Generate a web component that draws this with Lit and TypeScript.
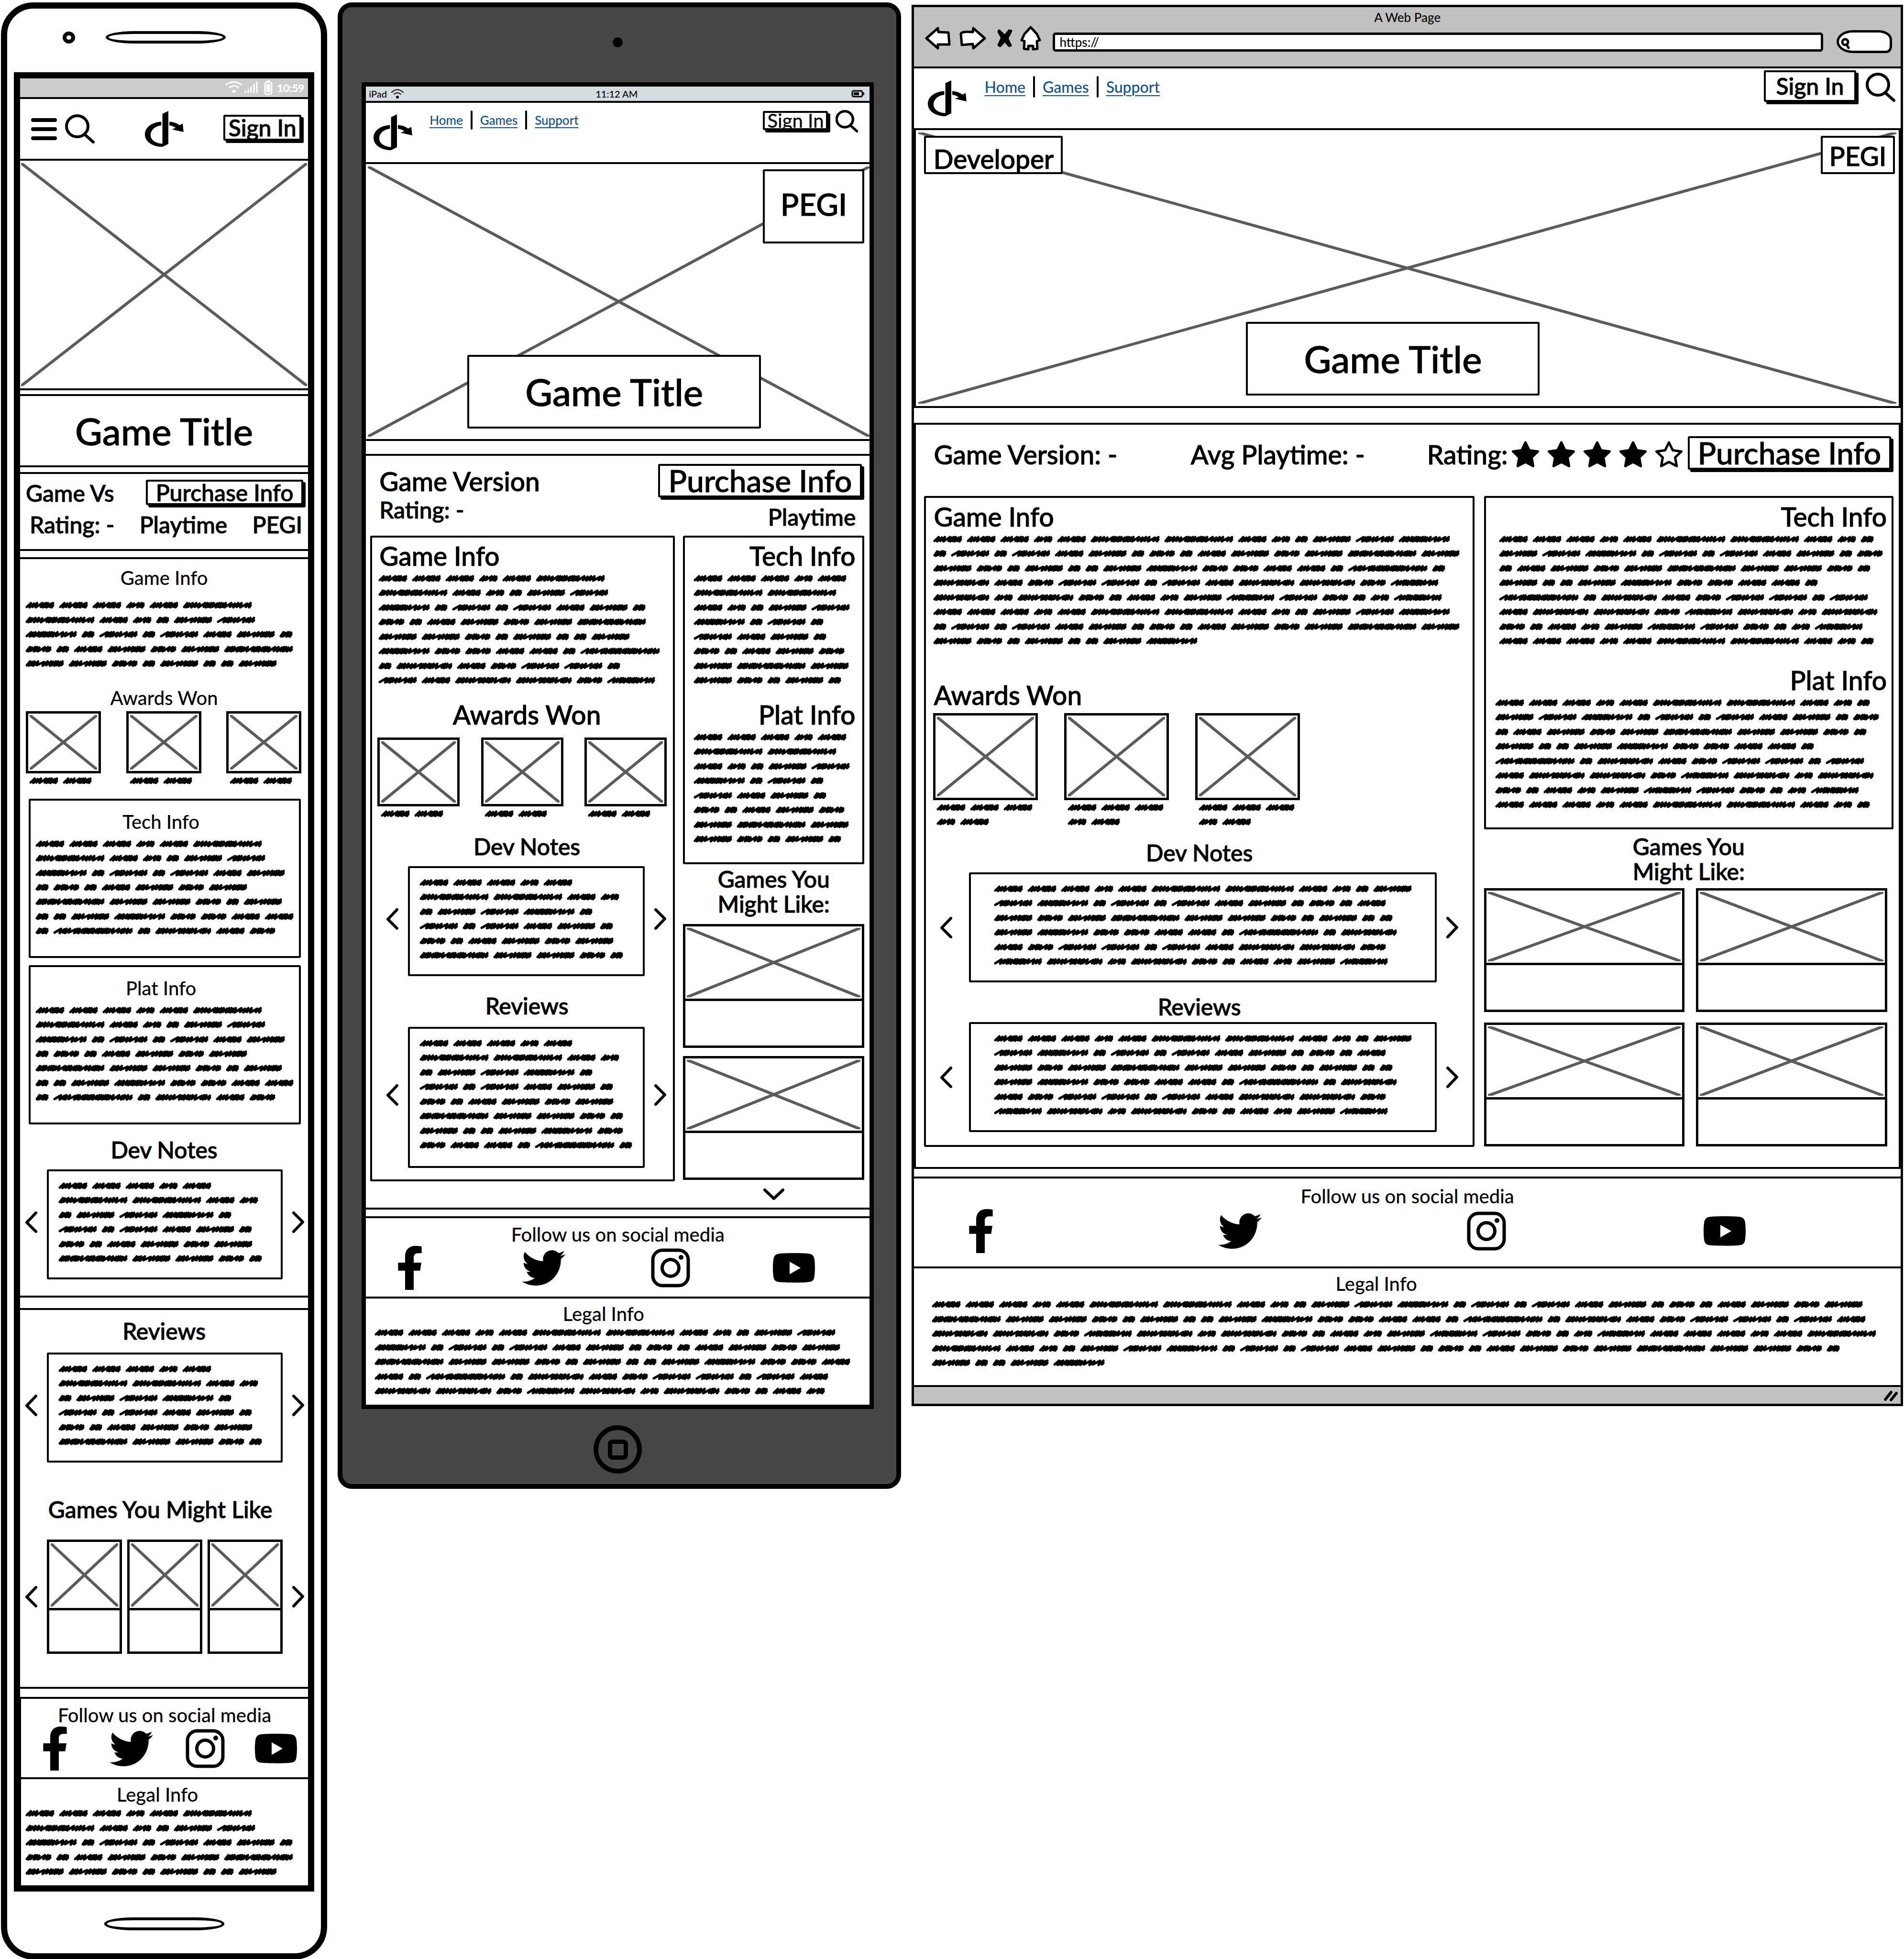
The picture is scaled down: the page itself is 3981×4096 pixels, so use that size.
import { LitElement, html, svg, css } from "lit";
import { customElement, property } from "lit/decorators.js";

/* ---------- Scribbled filler copy ---------- */

/** Word shapes: total width and the stroke rhythm (l = long sweep, s = open loop, d = tight loop). */
const WORDS: Record<string, { width: number; rhythm: string }> = {
  A: { width: 61, rhythm: "sssldddsd" },
  B: { width: 40, rhythm: "sslsd" },
  C: { width: 145, rhythm: "ddssslddddsddddlsssls" },
  D: { width: 28, rhythm: "ddsdd" },
  E: { width: 81, rhythm: "dddslssddddd" },
  e: { width: 81, rhythm: "ldddsslsds" },
  F: { width: 55, rhythm: "ddsddlsd" },
  G: { width: 108, rhythm: "sddsdddddddslsls" },
  H: { width: 145, rhythm: "ddddsdddsldddsdddlssddds" },
  I: { width: 118, rhythm: "dddssslddsddsldds" },
  J: { width: 167, rhythm: "lsdslddsdddddsddddddslsdss" },
  K: { width: 101, rhythm: "lssddsdddddslss" },
};

const STEP: Record<string, number> = { l: 13, s: 8, d: 5 };

const COPY = (
  "A A A B A C C A B D E e G D e D e A E D F D A E F E H E " +
  "E F D E D D E G F F A A D J D I A F e e D e A I I F K " +
  "I B I F D A B E K e F D B K"
).split(" ");

function scribblePath(width: number, rhythm: string): string {
  const steps = [...rhythm].map((c) => STEP[c]);
  const total = steps.reduce((a, b) => a + b, 0);
  const scale = (width - 8) / total;
  let x = 3;
  let d = `M${x} 12`;
  steps.forEach((step, i) => {
    const next = x + step * scale;
    const top = i % 3 === 1 ? 5 : 4;
    const low = i % 2 === 0 ? 13 : 12;
    d += `L${Math.min(next + 2, width - 3).toFixed(1)} ${top}L${(next - 1).toFixed(1)} ${low}`;
    x = next;
  });
  return `${d}L${width - 3} 9`;
}

const PATHS = new Map(
  Object.entries(WORDS).map(([k, w]) => [k, scribblePath(w.width, w.rhythm)]),
);

@customElement("scribble-text")
export class ScribbleText extends LitElement {
  @property({ type: Number }) words = 10;
  @property({ type: Number }) rows = 1;

  static styles = css`
    :host {
      display: block;
    }
    .copy {
      display: flex;
      flex-wrap: wrap;
      column-gap: 9px;
      align-content: space-between;
    }
    .word {
      display: block;
      height: 16px;
      fill: none;
      stroke: #000;
      stroke-width: 5;
      stroke-linecap: round;
      stroke-linejoin: round;
    }
  `;

  render() {
    const height = Math.round((this.rows - 1) * 30.4) + 16;
    return html`<div class="copy" aria-hidden="true" style="height:${height}px">
      ${Array.from({ length: this.words }, (_, i) => {
        const key = COPY[i % COPY.length];
        const w = WORDS[key].width;
        return html`<svg class="word" width=${w} viewBox="0 0 ${w} 16">
          <path d=${PATHS.get(key)!}></path>
        </svg>`;
      })}
    </div>`;
  }
}

/* ---------- Icons ---------- */

const cross = html`<svg class="cross" preserveAspectRatio="none" viewBox="0 0 100 100" aria-hidden="true">
  <path vector-effect="non-scaling-stroke" d="M0 0L100 100M100 0L0 100"></path>
</svg>`;

const logo = html`<svg class="logo" viewBox="0 0 81 75" role="img" aria-label="Logo">
  <path d="M36.6 6L49 0V69L36.6 75ZM34.4 22.6V30.3C22 31.500 12 39 12 50.800C12 61 23 68 36.600 68.400V75C17 75 0 65 0 49C0 34 15 23.500 34.400 22.600ZM51 22.600C60 23 67 26 72.400 29.800L79 26.500L80.800 44L56.500 38.600L64.400 35.300C60 32 56 31 51 30.300Z"></path>
</svg>`;

const magnifier = html`<svg class="line-icon" viewBox="0 0 62 61" aria-hidden="true">
  <ellipse cx="25.500" cy="25" rx="22.500" ry="22"></ellipse>
  <path d="M42 43L59 58"></path>
</svg>`;

const chevron = (dir: string) => {
  const d =
    dir === "left" ? "M22 3L3 23L22 42" : dir === "right" ? "M3 3L22 22L3 42" : "M3 3L22 21L41 3";
  return dir === "down"
    ? html`<svg class="chevron-down" viewBox="0 0 44 24" aria-hidden="true"><path d=${d}></path></svg>`
    : html`<svg class="chevron-side" viewBox="0 0 25 45" aria-hidden="true"><path d=${d}></path></svg>`;
};

const starPath =
  "M28.500 3L36.500 19.500L54.500 22L41.500 34.500L44.700 52.500L28.500 44L12.300 52.500L15.500 34.500L2.500 22L20.500 19.500Z";

const star = (filled: boolean) => svg`<svg class=${filled ? "star star-on" : "star"} viewBox="0 0 57 55"><path d=${starPath}></path></svg>`;

const facebook = html`<svg class="social-fb" viewBox="22 0 276 512" aria-hidden="true">
  <path d="M279.14 288l14.22-92.66h-88.91v-60.13c0-25.35 12.42-50.06 52.24-50.06h40.42V6.260S260.430 0 225.360 0c-73.220 0-121.080 44.380-121.080 124.720v70.620H22.890V288h81.390v224h100.170V288z"></path>
</svg>`;
const twitter = html`<svg class="social-tw" viewBox="0 48 512 416" aria-hidden="true">
  <path d="M459.37 151.716c.325 4.548.325 9.097.325 13.645 0 138.720-105.583 298.558-298.558 298.558-59.452 0-114.680-17.219-161.137-47.106 8.447.974 16.568 1.299 25.340 1.299 49.055 0 94.213-16.568 130.274-44.832-46.132-.975-84.792-31.188-98.112-72.772 6.498.974 12.995 1.624 19.818 1.624 9.421 0 18.843-1.300 27.614-3.573-48.081-9.747-84.143-51.980-84.143-102.985v-1.299c13.969 7.797 30.214 12.670 47.431 13.319-28.264-18.843-46.781-51.005-46.781-87.391 0-19.492 5.197-37.360 14.294-52.954 51.655 63.675 129.300 105.258 216.365 109.807-1.624-7.797-2.599-15.918-2.599-24.040 0-57.828 46.782-104.934 104.934-104.934 30.213 0 57.502 12.670 76.670 33.137 23.715-4.548 46.456-13.320 66.599-25.340-7.798 24.366-24.366 44.833-46.132 57.827 21.117-2.273 41.584-8.122 60.426-16.243-14.292 20.791-32.161 39.308-52.628 54.253z"></path>
</svg>`;
const instagram = html`<svg class="social-ig" viewBox="0 0 82 82" aria-hidden="true">
  <rect x="4" y="4" width="74" height="74" rx="20"></rect>
  <circle cx="41" cy="41" r="17.500"></circle>
  <circle class="dot" cx="63" cy="19" r="5"></circle>
</svg>`;
const youtube = html`<svg class="social-yt" viewBox="14.930 64 546.140 384" aria-hidden="true">
  <path d="M549.655 124.083c-6.281-23.650-24.787-42.276-48.284-48.597C458.781 64 288 64 288 64S117.220 64 74.629 75.486c-23.497 6.322-42.003 24.947-48.284 48.597-11.412 42.867-11.412 132.305-11.412 132.305s0 89.438 11.412 132.305c6.281 23.650 24.787 41.500 48.284 47.821C117.220 448 288 448 288 448s170.780 0 213.371-11.486c23.497-6.321 42.003-24.171 48.284-47.821 11.412-42.867 11.412-132.305 11.412-132.305s0-89.438-11.412-132.305zm-317.510 213.508V175.185l142.739 81.205-142.739 81.201z"></path>
</svg>`;

/* ---------- Page ---------- */

@customElement("app-root")
export class AppRoot extends LitElement {
  static styles = css`
    :host {
      display: block;
      background: #fff;
      color: #000;
      font-family: Lato, "Open Sans", sans-serif;
      font-weight: 500;
    }
    * {
      box-sizing: border-box;
    }
    h1, h2, h3, p {
      margin: 0;
      font: inherit;
    }
    svg {
      display: block;
      flex: none;
    }
    button {
      margin: 0;
      padding: 0;
      border: 0;
      background: none;
      color: inherit;
      font: inherit;
    }

    /* Type scale */
    .t-title { font-size: 78px; line-height: 96px; -webkit-text-stroke: 1px #000; }
    .t-xl { font-size: 64px; line-height: 64px; -webkit-text-stroke: 1px #000; }
    .t-lg { font-size: 55px; line-height: 64px; -webkit-text-stroke: 1px #000; }
    .t-md { font-size: 48px; line-height: 56px; -webkit-text-stroke: 1px #000; }
    .t-sm { font-size: 40px; line-height: 48px; }
    .center { text-align: center; }
    .right { text-align: right; }

    .board {
      display: grid;
      grid-template-columns: minmax(0, 682fr) minmax(0, 1178fr) minmax(0, 2072fr);
      gap: 22px;
      align-items: start;
      padding: 5px 2px 0;
    }

    /* Shared pieces */
    .panel {
      border-top: 4px solid #000;
      border-bottom: 4px solid #000;
    }
    .card {
      border: 4px solid #000;
      border-radius: 3px;
      background: #fff;
    }
    .hero {
      position: relative;
      padding: 5px 2px;
      border-bottom: 4px solid #000;
    }
    .cross {
      width: 100%;
      height: 100%;
      fill: none;
      stroke: #5b5b5b;
      stroke-width: 6;
    }
    .picture {
      padding: 3px;
      border: 5px solid #000;
    }
    .push {
      display: flex;
      align-items: center;
      justify-content: center;
      border: 4px solid #000;
      border-radius: 3px;
      box-shadow: 5px 5px 0 #000;
      margin: 0 5px 5px 0;
      white-space: nowrap;
    }
    .line-icon,
    .chevron-side,
    .chevron-down {
      fill: none;
      stroke: #000;
      stroke-width: 6;
      stroke-linecap: round;
      stroke-linejoin: round;
    }
    .line-icon { width: 62px; height: 61px; }
    .chevron-side { width: 25px; height: 45px; }
    .chevron-down { width: 44px; height: 24px; }
    .logo { width: 81px; height: 75px; }

    .nav {
      display: flex;
      align-items: center;
    }
    .nav a {
      color: #0b5394;
      text-decoration: underline;
      text-decoration-thickness: 2px;
      text-underline-offset: 5px;
    }
    .rule {
      width: 4px;
      height: 100%;
      border-radius: 2px;
      background: #000;
    }

    .carousel {
      display: grid;
      grid-template-columns: 25px 1fr 25px;
      align-items: center;
      column-gap: 20px;
      padding: 0 8px 0 11px;
    }
    .phone .quotes button,
    .tablet .quotes button { padding-bottom: 10px; }
    .quote {
      min-height: 230px;
      padding: 22px 0 32px 20px;
    }
    .quote scribble-text { width: 450px; }
    .game {
      display: flex;
      flex-direction: column;
    }
    .blurb {
      flex: 1;
      border: 5px solid #000;
      border-top: 0;
    }

    .social {
      display: grid;
      align-items: center;
      height: 92px;
    }
    .social a { color: inherit; width: max-content; }
    .social-fb { width: 50px; height: 92px; }
    .social-tw { width: 91px; height: 76px; }
    .social-ig { width: 82px; height: 82px; fill: none; stroke: #000; stroke-width: 7; }
    .social-ig .dot { fill: #000; stroke: none; }
    .social-yt { width: 88px; height: 62px; }
    .follow {
      border-top: 4px solid #000;
      border-bottom: 4px solid #000;
      padding: 10px 0 14px;
    }
    .legal { padding: 8px 0 21px; }
    .legal scribble-text { margin-top: 7px; }

    /* Phone */
    .phone {
      display: flex;
      flex-direction: column;
      border: 13px solid #000;
      border-radius: 68px;
      padding: 47px 14px 0;
    }
    .phone-top {
      display: flex;
      align-items: center;
      gap: 64px;
      height: 26px;
      margin: 0 0 60px 102px;
    }
    .lens { width: 26px; height: 25px; border: 8px solid #000; border-radius: 50%; }
    .slot { width: 251px; height: 26px; border: 6px solid #000; border-radius: 60px / 13px; }
    .phone-home {
      align-self: center;
      height: 27px;
      margin: 54px 0 48px;
    }
    .phone-screen { border: 13px solid #000; }
    .phone-status {
      display: flex;
      align-items: center;
      justify-content: flex-end;
      height: 39px;
      padding-right: 8px;
      background: #ccc;
      color: #fff;
      font-size: 22px;
      line-height: 24px;
      -webkit-text-stroke: 1px #fff;
    }
    .status-icons { width: 100px; height: 32px; margin-right: 9px; fill: none; stroke: #fff; stroke-width: 3; stroke-linecap: round; }
    .status-icons .solid { fill: #fff; stroke: none; }
    .phone-header {
      display: grid;
      grid-template-columns: 1fr auto 1fr;
      align-items: center;
      height: 133px;
    }
    .phone-tools { display: flex; align-items: center; gap: 17px; padding-left: 23px; }
    .burger { width: 54px; height: 46px; stroke: #000; stroke-width: 8; stroke-linecap: round; }
    .phone-sign { justify-self: end; width: 163px; height: 54px; margin-right: 14px; }
    .phone-hero { height: 480px; }
    .phone-title { margin-top: 8px; padding: 25px 0 24px; }
    .phone-facts { margin-top: 10px; padding: 12px 10px 23px 12px; }
    .facts-row { display: flex; justify-content: space-between; }
    .facts-row + .facts-row { margin-top: 8px; padding: 0 2px 0 8px; }
    .phone-buy { width: 329px; height: 53px; margin-right: 0; }
    .phone-main { margin-top: 13px; padding: 15px 0 34px; }
    .phone-copy { width: 575px; margin: 25px 0 40px 11px; }
    .phone-awards {
      display: flex;
      justify-content: space-between;
      margin: 4px 14px 0 12px;
    }
    .phone-awards .picture { width: 157px; height: 130px; }
    .award scribble-text { margin: 7px 0 0 7px; }
    .phone-info { margin: 30px 15px 0 18px; padding: 20px 0 44px 10px; height: 333px; }
    .phone-info + .phone-info { margin-top: 15px; }
    .phone-info h3 { padding-right: 26px; }
    .phone-info scribble-text { margin-top: 14px; width: 548px; }
    .phone-main .notes { margin: 25px 0 13px; }
    .phone-more { margin-top: 22px; padding: 16px 0 69px; }
    .phone-more .carousel:first-of-type { margin-top: 17px; }
    .phone-more .might { margin: 70px 0 35px; padding-right: 16px; }
    .phone-games { display: grid; grid-template-columns: 1fr 1fr 1fr; gap: 11px; }
    .phone-games .game { height: 239px; }
    .phone-games .picture { height: 148px; }
    .phone-footer { margin-top: 17px; border-left: 2px solid #000; }
    .phone-footer .social { grid-template-columns: 139fr 159fr 146fr 111fr; padding-left: 46px; }
    .phone-footer .legal h3 { padding-right: 30px; }
    .phone-footer .legal scribble-text { margin-left: 9px; width: 575px; }

    /* Tablet */
    .tablet {
      display: flex;
      flex-direction: column;
      align-items: center;
      border: 10px solid #000;
      border-radius: 30px;
      background: #464646;
      padding: 63px 47px 22px 40px;
    }
    .tablet-lens { width: 21px; height: 21px; border-radius: 50%; background: #000; margin-bottom: 73px; }
    .tablet-home {
      display: grid;
      place-items: center;
      width: 101px;
      height: 101px;
      margin-top: 34px;
      border: 10px solid #000;
      border-radius: 50%;
    }
    .home-square { width: 42px; height: 42px; border: 9px solid #000; border-radius: 9px; }
    .tablet-screen { align-self: stretch; border: 9px solid #000; background: #fff; }
    .tablet-status {
      display: grid;
      grid-template-columns: 1fr auto 1fr;
      align-items: center;
      height: 30px;
      padding: 0 11px 0 6px;
      background: #d6dde0;
      font-size: 20px;
      line-height: 24px;
    }
    .carrier { display: flex; align-items: center; gap: 8px; }
    .wifi { width: 28px; height: 20px; fill: none; stroke: #000; stroke-width: 2; stroke-linecap: round; }
    .wifi .solid { fill: #000; stroke: none; }
    .battery { justify-self: end; width: 27px; height: 16px; fill: none; stroke: #000; stroke-width: 3; }
    .battery .solid { fill: #000; stroke: none; }
    .tablet-header { display: flex; align-items: flex-start; height: 132px; padding: 0 24px 0 16px; }
    .tablet-header .logo { margin-top: 24px; }
    .tablet-header .nav { height: 40px; margin: 16px auto 0 36px; gap: 16px; font-size: 26px; line-height: 32px; }
    .tablet-sign { width: 136px; height: 40px; margin: 17px 16px 0 0; }
    .tablet-header .line-icon { width: 47px; height: 47px; stroke-width: 7; margin-top: 15px; }
    .tablet-hero { height: 579px; padding: 5px 0 5px 4px; }
    .tablet-pegi {
      position: absolute;
      top: 11px;
      right: 11px;
      width: 212px;
      height: 155px;
      display: grid;
      place-items: center;
      padding-bottom: 10px;
    }
    .game-title {
      position: absolute;
      display: grid;
      place-items: center;
      width: 614px;
      height: 154px;
    }
    .tablet-title { top: 399px; left: 212px; }
    .tablet-main { margin-top: 27px; padding: 17px 11px 16px 9px; }
    .tablet-top { display: flex; justify-content: space-between; padding: 0 0 11px 19px; }
    .tablet-version { padding-top: 4px; }
    .tablet-buy { width: 426px; height: 70px; }
    .tablet-top .right p { margin-top: 13px; padding-right: 18px; }
    .tablet-columns { display: grid; grid-template-columns: minmax(0, 636fr) minmax(0, 379fr); column-gap: 17px; align-items: start; }
    .tablet-left { padding: 6px 0 24px; }
    .tablet-left .lead { padding-left: 15px; }
    .tablet-left .lead-copy { width: 592px; margin: 7px 0 32px 13px; }
    .tablet-left .center { padding-left: 18px; }
    .tablet-awards { display: flex; justify-content: space-between; margin: 16px 13px 0 11px; }
    .tablet-awards .picture { width: 172px; height: 144px; }
    .tablet-left .carousel { padding: 0 14px 0 30px; }
    .tablet-left .notes { margin: 33px 0 13px; }
    .tablet-left .reviews { margin: 34px 0 16px; }
    .tablet-left .tall { min-height: 295px; }
    .tablet-info { padding: 6px 0 41px; }
    .tablet-info h3 { padding-right: 15px; }
    .tablet-info scribble-text { width: 334px; margin: 7px 0 0 18px; }
    .tablet-info h3 + scribble-text + h3 { margin-top: 32px; }
    .might-two { font-size: 48px; line-height: 52px; text-align: center; -webkit-text-stroke: 1px #000; }
    .tablet-columns .might-two { margin: 5px 0 16px; }
    .wide-game { height: 259px; }
    .wide-game .picture { height: 161px; }
    .wide-game + .wide-game { margin-top: 17px; }
    .more { display: block; margin: 18px auto 0; }
    .tablet-footer { margin-top: 14px; }
    .tablet-footer .social { grid-template-columns: 258fr 270fr 254fr 202fr; padding-left: 67px; }
    .tablet-footer .legal h3 { padding-right: 60px; }
    .tablet-footer .legal scribble-text { width: 1030px; margin-left: 18px; }

    /* Browser window */
    .browser { margin-top: 5px; border: 5px solid #000; }
    .chrome { height: 124px; padding-top: 5px; background: #c1c1c1; }
    .chrome-title { font-size: 26px; line-height: 32px; text-align: center; }
    .chrome-bar { display: flex; align-items: center; height: 56px; padding: 0 18px 0 23px; }
    .chrome-bar svg { fill: #fff; stroke: #000; stroke-width: 5; stroke-linejoin: round; stroke-linecap: round; }
    .back { width: 54px; height: 48px; }
    .forward { margin-left: 17px; }
    .forward-icon { width: 57px; height: 48px; }
    .stop { width: 32px; height: 38px; margin-left: 23px; }
    .home { width: 44px; height: 52px; margin-left: 16px; }
    .url {
      flex: 1;
      min-width: 0;
      height: 40px;
      margin: 15px 0 0 24px;
      padding: 0 9px;
      border: 5px solid #000;
      border-radius: 6px;
      background: #fff;
      color: #000;
      font: inherit;
      font-size: 26px;
    }
    .find { position: relative; width: 116px; height: 48px; margin: 14px 0 0 28px; }
    .find input {
      width: 100%;
      height: 100%;
      padding: 0 12px 0 32px;
      border: 5px solid #000;
      border-radius: 34px 28px 12px 34px / 24px 20px 14px 24px;
      background: #fff;
      font: inherit;
      font-size: 20px;
    }
    .find svg { position: absolute; left: 9px; top: 16px; width: 20px; height: 24px; fill: none; }
    .desk-header { display: flex; align-items: flex-start; height: 129px; padding: 0 11px 0 29px; border-top: 4px solid #000; }
    .desk-header .logo { margin-top: 25px; }
    .desk-header .nav { height: 45px; margin: 16px auto 0 37px; gap: 16px; font-size: 32px; line-height: 40px; }
    .desk-sign { width: 193px; height: 66px; margin: 4px 20px 0 0; }
    .desk-header .line-icon { margin-top: 9px; }
    .desk-hero { height: 585px; border: 4px solid #000; padding: 5px; }
    .tag {
      position: absolute;
      display: grid;
      place-items: center;
      height: 80px;
      padding-top: 12px;
    }
    .developer { top: 12px; left: 17px; width: 290px; }
    .desk-pegi { top: 12px; right: 8px; width: 155px; padding-top: 4px; }
    .desk-title { top: 401px; left: 690px; }
    .desk-main { margin-top: 31px; border: 4px solid #000; padding: 24px 11px 42px 17px; }
    .desk-facts {
      display: grid;
      grid-template-columns: 537fr 494fr 545fr 430fr;
      align-items: center;
      padding: 0 0 50px 20px;
    }
    .rating { display: flex; align-items: center; gap: 8px; }
    .stars { display: flex; gap: 18px; }
    .star { width: 57px; height: 55px; fill: #fff; stroke: #000; stroke-width: 5; stroke-linejoin: round; }
    .star-on { fill: #000; }
    .desk-buy { height: 70px; }
    .desk-columns { display: grid; grid-template-columns: minmax(0, 1150fr) minmax(0, 856fr); column-gap: 20px; align-items: start; }
    .desk-left { padding: 7px 0 27px; }
    .desk-left .lead { padding-left: 16px; }
    .desk-left .lead-copy { width: 1109px; margin: 7px 0 73px 15px; }
    .desk-awards { display: flex; gap: 55px; margin: 6px 0 0 15px; }
    .desk-awards .award { width: 219px; }
    .desk-awards .picture { height: 182px; }
    .desk-left .carousel { padding: 0 30px; grid-template-columns: 40px 1fr 25px; }
    .desk-left .quote { padding-left: 48px; }
    .desk-left .quote scribble-text { width: 890px; }
    .desk-left .notes { margin: 29px 0 13px; }
    .desk-left .reviews { margin: 23px 0 4px; }
    .desk-info { padding: 7px 0 40px; }
    .desk-info h3 { padding-right: 10px; }
    .desk-info scribble-text { width: 816px; margin: 7px 0 0 27px; }
    .desk-info h3 + scribble-text + h3 { margin-top: 42px; }
    .desk-info h3 + scribble-text + h3 + scribble-text { margin-left: 19px; }
    .desk-columns .might-two { margin: 10px 0 9px; }
    .desk-games { display: grid; grid-template-columns: 420fr 400fr; gap: 22px 24px; padding-right: 13px; }
    .desk-games .wide-game { margin: 0; }
    .desk-footer { margin-top: 16px; border-bottom: 4px solid #000; }
    .desk-footer .follow { padding: 13px 0 28px; }
    .desk-footer .social { grid-template-columns: 521fr 521fr 495fr 413fr; padding-left: 115px; margin-top: 3px; }
    .desk-footer .legal { padding-bottom: 39px; }
    .desk-footer .legal h3 { padding-right: 130px; }
    .desk-footer .legal scribble-text { width: 1981px; margin: 11px 0 0 37px; }
    .resize { display: flex; justify-content: flex-end; height: 35px; padding: 6px 6px 0 0; background: #c1c1c1; }
    .grip { width: 30px; height: 25px; stroke: #000; stroke-width: 6; stroke-linecap: round; }
  `;

  private award(words: number, rows: number) {
    return html`<div class="award">
      <div class="picture">${cross}</div>
      <scribble-text words=${words} rows=${rows}></scribble-text>
    </div>`;
  }

  private quote(words: number, rows: number, tall = false) {
    return html`<div class="carousel quotes">
      <button aria-label="Previous">${chevron("left")}</button>
      <div class=${tall ? "card quote tall" : "card quote"}>
        <scribble-text words=${words} rows=${rows}></scribble-text>
      </div>
      <button aria-label="Next">${chevron("right")}</button>
    </div>`;
  }

  private game(wide = true) {
    return html`<div class=${wide ? "game wide-game" : "game"}>
      <div class="picture">${cross}</div>
      <div class="blurb"></div>
    </div>`;
  }

  private nav() {
    return html`<nav class="nav">
      <a href="#home">Home</a><span class="rule"></span>
      <a href="#games">Games</a><span class="rule"></span>
      <a href="#support">Support</a>
    </nav>`;
  }

  private footer(kind: string, words: number) {
    return html`<footer class="${kind}-footer">
      <div class="follow">
        <h2 class="t-sm center">Follow us on social media</h2>
        <div class="social">
          <a href="#facebook" aria-label="Facebook">${facebook}</a>
          <a href="#twitter" aria-label="Twitter">${twitter}</a>
          <a href="#instagram" aria-label="Instagram">${instagram}</a>
          <a href="#youtube" aria-label="YouTube">${youtube}</a>
        </div>
      </div>
      <div class="legal">
        <h3 class="t-sm center">Legal Info</h3>
        <scribble-text words=${words} rows="5"></scribble-text>
      </div>
    </footer>`;
  }

  private phone() {
    return html`<section class="phone">
      <div class="phone-top"><span class="lens"></span><span class="slot"></span></div>
      <div class="phone-screen">
        <div class="phone-status">
          <svg class="status-icons" viewBox="0 0 100 32" aria-hidden="true">
            <path d="M2 9Q17 -2 34 9M9 15Q18 8 28 15"></path>
            <ellipse class="solid" cx="18" cy="23" rx="4" ry="3"></ellipse>
            <path d="M42 25V23M48 25V19M54 25V14M60 25V9M66 25V4"></path>
            <rect x="83" y="4" width="14" height="25" rx="4"></rect>
            <path class="solid" d="M86 8H94V25H86ZM87 0H93V4H87Z"></path>
          </svg>
          <span>10:59</span>
        </div>
        <header class="panel phone-header">
          <div class="phone-tools">
            <button aria-label="Menu">
              <svg class="burger" viewBox="0 0 54 46" aria-hidden="true"><path d="M4 4H50M4 23H50M4 42H50"></path></svg>
            </button>
            <button aria-label="Search">${magnifier}</button>
          </div>
          ${logo}
          <button class="push t-md phone-sign">Sign In</button>
        </header>
        <div class="hero phone-hero">${cross}</div>
        <div class="panel phone-title"><h1 class="t-title center">Game Title</h1></div>
        <div class="panel phone-facts">
          <div class="facts-row t-md">
            <span>Game Vs</span>
            <button class="push phone-buy">Purchase Info</button>
          </div>
          <div class="facts-row t-md"><span>Rating: -</span><span>Playtime</span><span>PEGI</span></div>
        </div>
        <div class="panel phone-main">
          <h2 class="t-sm center">Game Info</h2>
          <scribble-text class="phone-copy" words="35" rows="5"></scribble-text>
          <h2 class="t-sm center">Awards Won</h2>
          <div class="phone-awards">${this.award(2, 1)}${this.award(2, 1)}${this.award(2, 1)}</div>
          <div class="card phone-info">
            <h3 class="t-sm center">Tech Info</h3>
            <scribble-text words="46" rows="7"></scribble-text>
          </div>
          <div class="card phone-info">
            <h3 class="t-sm center">Plat Info</h3>
            <scribble-text words="46" rows="7"></scribble-text>
          </div>
          <h2 class="t-md center notes">Dev Notes</h2>
          ${this.quote(31, 6)}
        </div>
        <div class="panel phone-more">
          <h2 class="t-md center">Reviews</h2>
          ${this.quote(31, 6)}
          <h2 class="t-md center might">Games You Might Like</h2>
          <div class="carousel">
            <button aria-label="Previous">${chevron("left")}</button>
            <div class="phone-games">${this.game(false)}${this.game(false)}${this.game(false)}</div>
            <button aria-label="Next">${chevron("right")}</button>
          </div>
        </div>
        ${this.footer("phone", 35)}
      </div>
      <span class="slot phone-home"></span>
    </section>`;
  }

  private tablet() {
    return html`<section class="tablet">
      <span class="tablet-lens"></span>
      <div class="tablet-screen">
        <div class="tablet-status">
          <span class="carrier">iPad
            <svg class="wifi" viewBox="0 0 28 20" aria-hidden="true">
              <path d="M2 7Q14 -4 26 7M7 11Q14 5 21 11"></path>
              <circle class="solid" cx="14" cy="17" r="3"></circle>
            </svg>
          </span>
          <span>11:12 AM</span>
          <svg class="battery" viewBox="0 0 27 16" aria-hidden="true">
            <rect x="2" y="2" width="21" height="12" rx="3"></rect>
            <path class="solid" d="M5 5H16V11H5ZM25 5H27V11H25Z"></path>
          </svg>
        </div>
        <header class="panel tablet-header">
          ${logo}${this.nav()}
          <button class="push t-sm tablet-sign">Sign In</button>
          <button aria-label="Search">${magnifier}</button>
        </header>
        <div class="hero tablet-hero">
          ${cross}
          <div class="card t-xl tablet-pegi">PEGI</div>
          <h1 class="card t-title game-title tablet-title">Game Title</h1>
        </div>
        <main class="panel tablet-main">
          <div class="tablet-top">
            <div class="tablet-version">
              <p class="t-lg">Game Version</p>
              <p class="t-md">Rating: -</p>
            </div>
            <div class="right">
              <button class="push t-xl tablet-buy">Purchase Info</button>
              <p class="t-md">Playtime</p>
            </div>
          </div>
          <div class="tablet-columns">
            <div class="card tablet-left">
              <h2 class="t-lg lead">Game Info</h2>
              <scribble-text class="lead-copy" words="55" rows="8"></scribble-text>
              <h2 class="t-lg center">Awards Won</h2>
              <div class="tablet-awards">${this.award(2, 1)}${this.award(2, 1)}${this.award(2, 1)}</div>
              <h2 class="t-md center notes">Dev Notes</h2>
              ${this.quote(31, 6)}
              <h2 class="t-md center reviews">Reviews</h2>
              ${this.quote(43, 8, true)}
            </div>
            <div>
              <div class="card tablet-info">
                <h3 class="t-lg right">Tech Info</h3>
                <scribble-text words="33" rows="8"></scribble-text>
                <h3 class="t-lg right">Plat Info</h3>
                <scribble-text words="33" rows="8"></scribble-text>
              </div>
              <h2 class="might-two">Games You<br />Might Like:</h2>
              ${this.game()}${this.game()}
              <button class="more" aria-label="More games">${chevron("down")}</button>
            </div>
          </div>
        </main>
        ${this.footer("tablet", 62)}
      </div>
      <button class="tablet-home" aria-label="Home"><span class="home-square"></span></button>
    </section>`;
  }

  private browser() {
    return html`<section class="browser">
      <div class="chrome">
        <div class="chrome-title">A Web Page</div>
        <div class="chrome-bar">
          <button aria-label="Back">
            <svg class="back" viewBox="0 0 54 48"><path d="M3 24L27 3L28 11L49 12L51 37L27 37L27 45Z"></path></svg>
          </button>
          <button class="forward" aria-label="Forward">
            <svg class="forward-icon" viewBox="0 0 57 48"><path d="M54 24L30 3L29 11Q8 9 4 14L6 38L29 36L30 45Z"></path></svg>
          </button>
          <button aria-label="Stop">
            <svg class="stop" viewBox="0 0 32 38"><path fill="#000" d="M4 3L16 14L25 3L29 4L21 19L28 34L25 35L16 24L6 35L3 33L10 18L3 5Z"></path></svg>
          </button>
          <button aria-label="Home page">
            <svg class="home" viewBox="0 0 44 52"><path d="M22 3L35 17L41 30L35 32L36 48L27 49L27 42L17 42L17 49L8 48L9 32L3 30L9 17Z"></path></svg>
          </button>
          <input class="url" type="text" value="https://" aria-label="Address" />
          <label class="find">
            <input type="search" aria-label="Search the web" />
            <svg viewBox="0 0 20 24"><circle cx="9" cy="9" r="6"></circle><path d="M12 14L16 21"></path></svg>
          </label>
        </div>
      </div>
      <header class="desk-header">
        ${logo}${this.nav()}
        <button class="push t-md desk-sign">Sign In</button>
        <button aria-label="Search">${magnifier}</button>
      </header>
      <div class="hero desk-hero">
        ${cross}
        <div class="card t-lg tag developer">Developer</div>
        <div class="card t-lg tag desk-pegi">PEGI</div>
        <h1 class="card t-title game-title desk-title">Game Title</h1>
      </div>
      <main class="desk-main">
        <div class="desk-facts t-lg">
          <span>Game Version: -</span>
          <span>Avg Playtime: -</span>
          <div class="rating">
            <span>Rating:</span>
            <div class="stars" role="img" aria-label="4 out of 5 stars">
              ${[true, true, true, true, false].map(star)}
            </div>
          </div>
          <button class="push t-xl desk-buy">Purchase Info</button>
        </div>
        <div class="desk-columns">
          <div class="card desk-left">
            <h2 class="t-lg lead">Game Info</h2>
            <scribble-text class="lead-copy" words="105" rows="8"></scribble-text>
            <h2 class="t-lg lead">Awards Won</h2>
            <div class="desk-awards">${this.award(5, 2)}${this.award(5, 2)}${this.award(5, 2)}</div>
            <h2 class="t-md center notes">Dev Notes</h2>
            ${this.quote(64, 6)}
            <h2 class="t-md center reviews">Reviews</h2>
            ${this.quote(64, 6)}
          </div>
          <div>
            <div class="card desk-info">
              <h3 class="t-lg right">Tech Info</h3>
              <scribble-text words="79" rows="8"></scribble-text>
              <h3 class="t-lg right">Plat Info</h3>
              <scribble-text words="79" rows="8"></scribble-text>
            </div>
            <h2 class="might-two">Games You<br />Might Like:</h2>
            <div class="desk-games">${this.game()}${this.game()}${this.game()}${this.game()}</div>
          </div>
        </div>
      </main>
      ${this.footer("desk", 105)}
      <div class="resize">
        <svg class="grip" viewBox="0 0 30 25" aria-hidden="true"><path d="M4 20L16 5M16 21L27 7"></path></svg>
      </div>
    </section>`;
  }

  render() {
    return html`<div class="board">${this.phone()}${this.tablet()}${this.browser()}</div>`;
  }
}
